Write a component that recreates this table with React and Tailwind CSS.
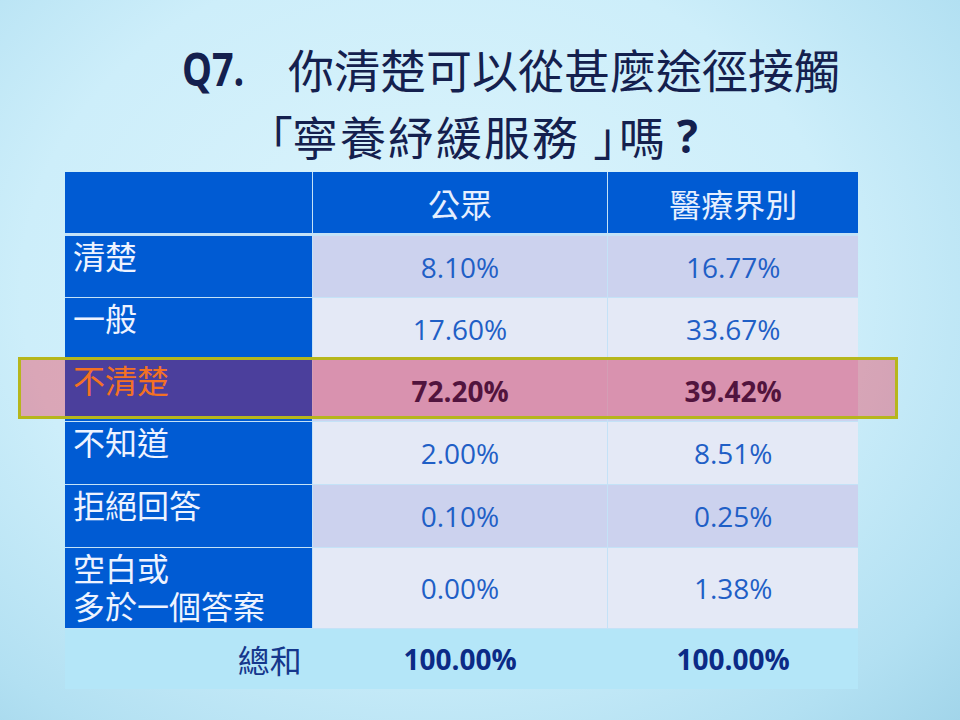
const cjk = "font-['Noto_Sans_CJK_TC','Noto_Sans_CJK_SC',sans-serif]";
const num = "font-['Open_Sans','Liberation_Sans',sans-serif]";

const rows = [
  { label: ["清楚"], a: "8.10%", b: "16.77%", band: "bg-[#ccd2ee]", h: "h-[61px]" },
  { label: ["一般"], a: "17.60%", b: "33.67%", band: "bg-[#e4e9f6]", h: "h-[61px]" },
  { label: ["不清楚"], a: "72.20%", b: "39.42%", band: "bg-[#ccd2ee]", h: "h-[61px]", hot: true },
  { label: ["不知道"], a: "2.00%", b: "8.51%", band: "bg-[#e4e9f6]", h: "h-[62px]" },
  { label: ["拒絕回答"], a: "0.10%", b: "0.25%", band: "bg-[#ccd2ee]", h: "h-[62px]" },
  { label: ["空白或", "多於一個答案"], a: "0.00%", b: "1.38%", band: "bg-[#e4e9f6]", h: "h-[80px]" },
];

function Row({ row }) {
  const valueCls = row.hot ? "font-bold text-[#0a1d4c]" : "text-[#1f5fc6]";
  return (
    <div className={`flex gap-px ${row.h}`}>
      <div
        className={`w-[247px] bg-[#005bd3] pl-2 text-[32px] leading-[38px] ${cjk} ${
          row.hot ? "text-[#f2a326]" : "text-[#eef3ff]"
        }`}
      >
        {row.label[0]}
        {row.label[1] && (
          <>
            <br />
            {row.label[1]}
          </>
        )}
      </div>
      <div className={`w-[295px] ${row.band} flex items-center justify-center text-[28px] ${num} ${valueCls}`}>
        {row.a}
      </div>
      <div className={`w-[250px] ${row.band} flex items-center justify-center text-[28px] ${num} ${valueCls}`}>
        {row.b}
      </div>
    </div>
  );
}

export default function App() {
  return (
    <div className="relative w-[960px] h-[720px] overflow-hidden bg-[radial-gradient(ellipse_at_45%_40%,#dcf4fc_0%,#cdeefa_55%,#b2e0f2_85%,#a2d5ea_100%)]">
      <div className={`pt-[35px] text-[46px] leading-[67px] text-[#14204e] ${cjk}`}>
        <div className="pl-[182px] flex">
          <span className={`w-[106px] font-bold inline-block scale-x-[0.82] origin-left ${num}`}>Q7.</span>
          <span>你清楚可以從甚麼途徑接觸</span>
        </div>
        <div className="pl-[269px] flex">
          <span className="[font-feature-settings:'palt']">「</span>
          <span className="tracking-[2px]">寧養紓緩服務</span>
          <span className="ml-[14px] [font-feature-settings:'palt']">」</span>
          <span className="ml-[2px]">嗎</span>
          <span className={`ml-[12px] font-bold inline-block scale-x-[0.95] origin-left ${num}`}>?</span>
        </div>
      </div>

      <div className="mt-[3px] ml-[65px] w-[793px] flex flex-col gap-px bg-[#c4e2f7]">
        <div className="flex gap-px h-[61px] mb-[2px]">
          <div className="w-[247px] bg-[#005bd3]" />
          <div className={`w-[295px] bg-[#005bd3] flex items-center justify-center text-[32px] text-[#e6efff] ${cjk}`}>
            公眾
          </div>
          <div className={`w-[250px] bg-[#005bd3] flex items-center justify-center text-[32px] text-[#e6efff] ${cjk}`}>
            醫療界別
          </div>
        </div>
        {rows.map((r) => (
          <Row key={r.a + r.b} row={r} />
        ))}
        <div className="flex gap-px h-[60px] bg-[#b4e6f8]">
          <div className={`w-[247px] bg-[#b4e6f8] flex items-center justify-end pr-[10px] text-[32px] text-[#15378c] ${cjk}`}>
            總和
          </div>
          <div className={`w-[295px] bg-[#b4e6f8] flex items-center justify-center text-[28px] font-bold text-[#0b2a86] ${num}`}>
            100.00%
          </div>
          <div className={`w-[250px] bg-[#b4e6f8] flex items-center justify-center text-[28px] font-bold text-[#0b2a86] ${num}`}>
            100.00%
          </div>
        </div>
      </div>

      <div className="absolute left-[18px] top-[357px] w-[880px] h-[62px] border-[3px] border-[#b6b61c] bg-[rgba(247,0,30,0.3)] pointer-events-none" />
    </div>
  );
}
